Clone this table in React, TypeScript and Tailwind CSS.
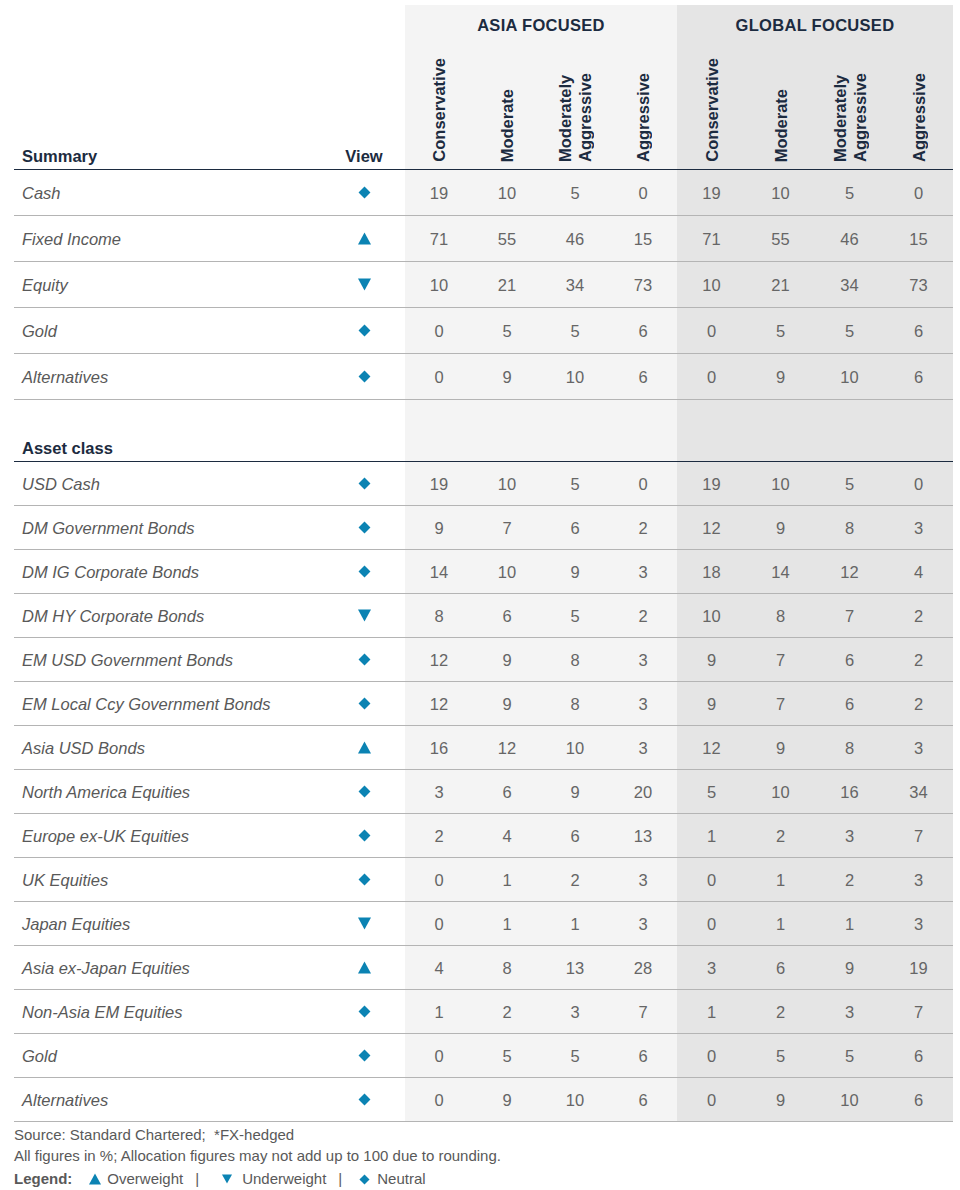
import React from "react";

type View = "u" | "d" | "n";
type Row = [string, View, number[]];

const summary: Row[] = [
  ["Cash", "n", [19, 10, 5, 0, 19, 10, 5, 0]],
  ["Fixed Income", "u", [71, 55, 46, 15, 71, 55, 46, 15]],
  ["Equity", "d", [10, 21, 34, 73, 10, 21, 34, 73]],
  ["Gold", "n", [0, 5, 5, 6, 0, 5, 5, 6]],
  ["Alternatives", "n", [0, 9, 10, 6, 0, 9, 10, 6]],
];

const assets: Row[] = [
  ["USD Cash", "n", [19, 10, 5, 0, 19, 10, 5, 0]],
  ["DM Government Bonds", "n", [9, 7, 6, 2, 12, 9, 8, 3]],
  ["DM IG Corporate Bonds", "n", [14, 10, 9, 3, 18, 14, 12, 4]],
  ["DM HY Corporate Bonds", "d", [8, 6, 5, 2, 10, 8, 7, 2]],
  ["EM USD Government Bonds", "n", [12, 9, 8, 3, 9, 7, 6, 2]],
  ["EM Local Ccy Government Bonds", "n", [12, 9, 8, 3, 9, 7, 6, 2]],
  ["Asia USD Bonds", "u", [16, 12, 10, 3, 12, 9, 8, 3]],
  ["North America Equities", "n", [3, 6, 9, 20, 5, 10, 16, 34]],
  ["Europe ex-UK Equities", "n", [2, 4, 6, 13, 1, 2, 3, 7]],
  ["UK Equities", "n", [0, 1, 2, 3, 0, 1, 2, 3]],
  ["Japan Equities", "d", [0, 1, 1, 3, 0, 1, 1, 3]],
  ["Asia ex-Japan Equities", "u", [4, 8, 13, 28, 3, 6, 9, 19]],
  ["Non-Asia EM Equities", "n", [1, 2, 3, 7, 1, 2, 3, 7]],
  ["Gold", "n", [0, 5, 5, 6, 0, 5, 5, 6]],
  ["Alternatives", "n", [0, 9, 10, 6, 0, 9, 10, 6]],
];

const profiles = ["Conservative", "Moderate", "Moderately Aggressive", "Aggressive"];

const colBg = (i: number) => (i < 4 ? "bg-[#f4f4f4]" : "bg-[#e5e5e5]");

const Icon = ({ v, size = 13 }: { v: View; size?: number }) => {
  if (v === "n")
    return (
      <svg width={size} height={size} viewBox="0 0 12 12">
        <path d="M6 0.5 L11.5 6 L6 11.5 L0.5 6 Z" fill="#0b83b3" />
      </svg>
    );
  if (v === "u")
    return (
      <svg width={size} height={size} viewBox="0 0 12 12">
        <path d="M6 0.5 L12 11.5 L0 11.5 Z" fill="#0b83b3" />
      </svg>
    );
  return (
    <svg width={size} height={size} viewBox="0 0 12 12">
      <path d="M0 0.5 L12 0.5 L6 11.5 Z" fill="#0b83b3" />
    </svg>
  );
};

const DataRow = ({ row, h }: { row: Row; h: string }) => (
  <>
    <div className={`${h} flex items-center pl-2 pt-[1px] border-b border-[#b4b4b4] italic text-[16.5px] text-[#595959]`}>
      {row[0]}
    </div>
    <div className={`${h} flex items-center justify-center border-b border-[#b4b4b4]`}>
      <Icon v={row[1]} />
    </div>
    {row[2].map((n, i) => (
      <div
        key={i}
        className={`${h} ${colBg(i)} flex items-center justify-center pt-[1px] border-b border-[#b4b4b4] text-[16.5px] text-[#666666]`}
      >
        {n}
      </div>
    ))}
  </>
);

export default function App() {
  return (
    <div className="w-[960px] min-h-[1190px] bg-white font-['Liberation_Sans',Arial,sans-serif]">
      <div className="ml-[14px] pt-[5px] w-[939px] grid grid-cols-[309px_82px_repeat(4,68px)_repeat(4,69px)]">
        {/* group titles */}
        <div className="h-[41px] col-span-2" />
        <div className="h-[41px] col-span-4 bg-[#f4f4f4] flex items-center justify-center font-bold text-[16.5px] tracking-[0.3px] text-[#1c2b40]">
          ASIA FOCUSED
        </div>
        <div className="h-[41px] col-span-4 bg-[#e5e5e5] flex items-center justify-center font-bold text-[16.5px] tracking-[0.3px] text-[#1c2b40]">
          GLOBAL FOCUSED
        </div>

        {/* column heads */}
        <div className="h-[124px] flex items-end pl-2 pb-0 border-b border-[#1c2b40] font-bold text-[16.5px] text-[#1c2b40]">
          Summary
        </div>
        <div className="h-[124px] flex items-end justify-center pb-0 border-b border-[#1c2b40] font-bold text-[16.5px] text-[#1c2b40]">
          View
        </div>
        {[0, 1, 2, 3, 4, 5, 6, 7].map((i) => (
          <div
            key={i}
            className={`h-[124px] ${colBg(i)} flex items-end justify-center pb-[7px] border-b border-[#1c2b40]`}
          >
            <span className="[writing-mode:vertical-rl] rotate-180 text-left leading-[20px] font-bold text-[16.5px] text-[#1c2b40] w-fit">
              {profiles[i % 4] === "Moderately Aggressive" ? (
                <>
                  Moderately
                  <br />
                  Aggressive
                </>
              ) : (
                profiles[i % 4]
              )}
            </span>
          </div>
        ))}

        {summary.map((r) => (
          <DataRow key={r[0]} row={r} h="h-[46px]" />
        ))}

        {/* asset class header */}
        <div className="h-[62px] flex items-end pl-2 pb-0 border-b border-[#1c2b40] font-bold text-[16.5px] text-[#1c2b40]">
          Asset class
        </div>
        <div className="h-[62px] border-b border-[#1c2b40]" />
        {[0, 1, 2, 3, 4, 5, 6, 7].map((i) => (
          <div key={i} className={`h-[62px] ${colBg(i)} border-b border-[#1c2b40]`} />
        ))}

        {assets.map((r, k) => (
          <DataRow key={k} row={r} h="h-[44px]" />
        ))}
      </div>

      <div className="ml-[14px] pt-[2px] text-[15px] text-[#595959]">
        <div className="leading-[21px]">Source: Standard Chartered;&nbsp; *FX-hedged</div>
        <div className="leading-[21px]">All figures in %; Allocation figures may not add up to 100 due to rounding.</div>
        <div className="mt-[2px] leading-[22px] flex items-center">
          <span className="font-bold">Legend:</span>
          <span className="ml-[17px] flex items-center gap-[6px]">
            <Icon v="u" size={12} />
            Overweight
          </span>
          <span className="ml-[12px]">|</span>
          <span className="ml-[23px] flex items-center gap-[10px]">
            <Icon v="d" size={10} />
            Underweight
          </span>
          <span className="ml-[12px]">|</span>
          <span className="ml-[17px] flex items-center gap-[7px]">
            <Icon v="n" size={11} />
            Neutral
          </span>
        </div>
      </div>
    </div>
  );
}
